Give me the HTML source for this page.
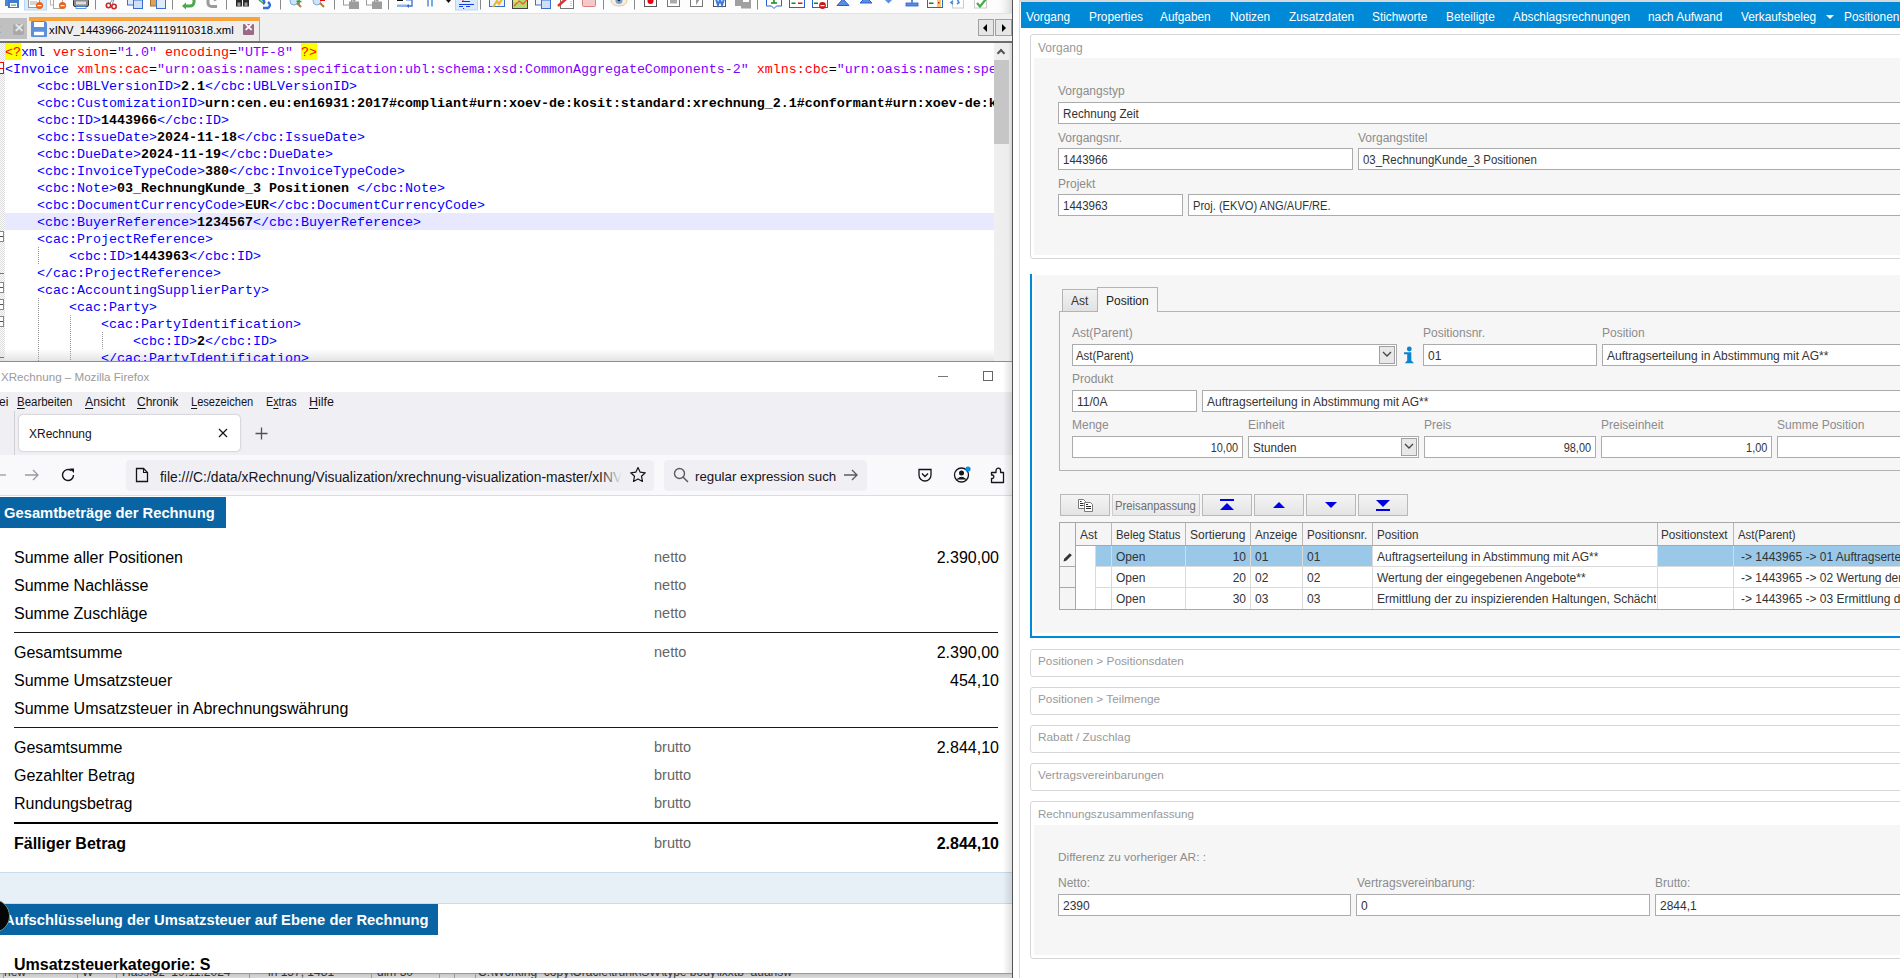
<!DOCTYPE html>
<html><head><meta charset="utf-8"><style>
*{box-sizing:border-box;margin:0;padding:0}
html,body{width:1900px;height:978px;overflow:hidden;background:#fff;font-family:"Liberation Sans",sans-serif}
body{position:relative}
.a{position:absolute}
.t{position:absolute;white-space:pre;line-height:1}
.ln{position:absolute;left:5px;height:17px;line-height:17px;white-space:pre;width:989px}
.tg{color:#0000ff}.at{color:#ff0000}.av{color:#8000ff}.bk{color:#000}.vl{color:#000;font-weight:bold}
.yl{color:#ff0000}
.ffm{font-size:12px;color:#15141a}
.ffm u{text-decoration:underline;text-underline-offset:2px}
.hdr{font-size:14.75px;font-weight:bold;color:#fff}
.inp{background:#fff;border:1px solid #ababab}
.it{color:#333}
.btn{background:linear-gradient(#f4f4f4,#e4e4e4);border:1px solid #b8b8b8}
.gt{font-size:12px;color:#333}
</style></head><body>
<svg class="a" style="left:0;top:0" width="1012" height="14" viewBox="0 0 1012 14">
<defs><linearGradient id="tbsh" x1="0" x2="1"><stop offset="0" stop-color="#fff" stop-opacity="0"/><stop offset="1" stop-color="#d8d8d8"/></linearGradient></defs>
<rect x="0" y="0" width="1012" height="14" fill="#fdfdfd"/>
<rect x="995" y="0" width="17" height="14" fill="url(#tbsh)"/>
<rect x="0" y="13" width="1012" height="1" fill="#e2e2e2"/>
<rect x="95.0" y="0" width="1" height="9.5" fill="#8a8a8a"/>
<rect x="172.0" y="0" width="1" height="9.5" fill="#8a8a8a"/>
<rect x="226.0" y="0" width="1" height="9.5" fill="#8a8a8a"/>
<rect x="280.0" y="0" width="1" height="9.5" fill="#8a8a8a"/>
<rect x="334.0" y="0" width="1" height="9.5" fill="#8a8a8a"/>
<rect x="388.0" y="0" width="1" height="9.5" fill="#8a8a8a"/>
<rect x="480.0" y="0" width="1" height="9.5" fill="#8a8a8a"/>
<rect x="603.0" y="0" width="1" height="9.5" fill="#8a8a8a"/>
<rect x="634.0" y="0" width="1" height="9.5" fill="#8a8a8a"/>
<rect x="757.0" y="0" width="1" height="9.5" fill="#8a8a8a"/>
<rect x="24.5" y="-1" width="22" height="11" fill="#d9ebfb" stroke="#b6d8f6"/>
<rect x="455.5" y="-1" width="22" height="11" fill="#d9ebfb" stroke="#b6d8f6"/>
<rect x="5" y="-2" width="11" height="8" fill="#4d86d4"/><rect x="8" y="0" width="11" height="8" fill="#3f7ad0"/><rect x="10" y="3" width="7" height="4" fill="#fff"/><rect x="11" y="4.5" width="5" height="1.2" fill="#5bb04a"/>
<rect x="28.5" y="-2" width="11" height="9.5" fill="#fff" stroke="#9a9a9a"/><path d="M30 2H37M30 4H36" stroke="#aaa"/>
<circle cx="39.5" cy="5.5" r="3.6" fill="#e5661c"/><rect x="37.5" y="5" width="4" height="1.2" fill="#fff"/>
<rect x="50.5" y="-2" width="8" height="7" fill="#fff" stroke="#b8b8b8"/><rect x="53.5" y="-1" width="9" height="9.5" fill="#fff" stroke="#aaa"/>
<circle cx="62.5" cy="5.5" r="3.6" fill="#e5661c"/><rect x="60.5" y="5" width="4" height="1.2" fill="#fff"/>
<rect x="73.5" y="-1" width="15" height="7.5" rx="1.5" fill="#8c8c8c" stroke="#333"/><rect x="76" y="1.5" width="10" height="3" fill="#ddd"/><rect x="76" y="6.5" width="10" height="2" fill="#fff" stroke="#3a7ad0" stroke-width=".8"/>
<circle cx="108.5" cy="5.5" r="2.2" fill="none" stroke="#c8282a" stroke-width="1.6"/><circle cx="114" cy="6.5" r="2.2" fill="none" stroke="#c8282a" stroke-width="1.6"/><path d="M110 3L113 -1M112.5 4L114 -1" stroke="#6a8fc0"/>
<rect x="127.5" y="-2" width="8" height="7" fill="#dce8f8" stroke="#3a6fd0"/><rect x="133.5" y="0" width="9" height="8.5" fill="#cfe0f6" stroke="#3a6fd0"/>
<rect x="150.5" y="-2" width="8" height="8" fill="#d9a45a" stroke="#a87030"/><rect x="156.5" y="-1" width="9" height="9.5" fill="#dfeafb" stroke="#3a6fd0"/>
<path d="M194 -2V2A4 4 0 0 1 190 6H185" stroke="#4aa84a" stroke-width="3" fill="none"/><path d="M182 6L186 2.5V9.5Z" fill="#4aa84a"/>
<path d="M208 -2V3A3.5 3.5 0 0 0 211.5 6.5H217" stroke="#9b9b9b" stroke-width="3" fill="none"/><path d="M217 -1L214 1" stroke="#9b9b9b" stroke-width="1.5"/>
<rect x="236" y="-1" width="6" height="7.5" fill="#2b2b2b"/><rect x="243" y="-1" width="6" height="7.5" fill="#2b2b2b"/><rect x="237.5" y="2.5" width="3" height="3.5" fill="#999"/><rect x="244.5" y="2.5" width="3" height="3.5" fill="#999"/>
<path d="M262 -1Q266 2 263 4M268 2Q272 5 268 8H263" stroke="#2f6fd6" stroke-width="2.4" fill="none"/><path d="M259 0L263 3" stroke="#3fa03f" stroke-width="1.5"/>
<circle cx="294" cy="1" r="4" fill="#cfe3f7" stroke="#7aaee0"/><path d="M297 3L301 7" stroke="#b07a3a" stroke-width="2"/><path d="M299 -1V4M296.5 1.5H301.5" stroke="#3a9a3a" stroke-width="1.5"/>
<circle cx="317" cy="1" r="4" fill="#cfe3f7" stroke="#7aaee0"/><path d="M320 3L324 7" stroke="#b07a3a" stroke-width="2"/><rect x="320" y="-1" width="5" height="2" fill="#e01010"/>
<rect x="343.5" y="-1" width="8" height="6" fill="#fff" stroke="#9a9a9a"/><rect x="349" y="1.5" width="10" height="7.5" fill="#9d9d9d"/><rect x="352.5" y="-1" width="3" height="2.5" fill="#9d9d9d"/>
<rect x="366.5" y="-1" width="8" height="6" fill="#fff" stroke="#9a9a9a"/><rect x="372" y="1.5" width="10" height="7.5" fill="#9d9d9d"/><rect x="375.5" y="-1" width="3" height="2.5" fill="#9d9d9d"/>
<rect x="397" y="-1" width="6" height="2" fill="#111"/><rect x="406" y="-1" width="6" height="1.5" fill="#4a80d0"/><rect x="397" y="4.5" width="11" height="2.5" fill="#8fb4ea"/><path d="M412 -1V6H408" stroke="#3a6fd0" stroke-width="1.3" fill="none"/><path d="M406.5 6L409 4V8Z" fill="#3a6fd0"/>
<rect x="427" y="-1" width="2" height="7.5" fill="#7aa8ee"/><rect x="431" y="-1" width="2" height="7.5" fill="#7aa8ee"/>
<path d="M446 0H451L448.5 3Z" fill="#111"/>
<path d="M462 1.5H470M459 4.5H474M459 6.5H463M466 6.5H470" stroke="#1a3ae8" stroke-width="1.2"/><rect x="462.5" y="-1" width="1" height="2" fill="#e02020"/><rect x="463" y="8" width="1.2" height="1" fill="#1a3ae8"/>
<rect x="489.5" y="-2" width="15" height="8.5" fill="#eef2fb" stroke="#3a6fd0"/><path d="M493 7L497 1L499 4L502 -1" stroke="#e8b830" stroke-width="2.2" fill="none"/>
<rect x="512.5" y="-2" width="15" height="10.5" fill="#b9d870" stroke="#444"/><path d="M514 6L519 1L523 4L527 0" stroke="#e85a2a" stroke-width="1.3" fill="none"/><rect x="513" y="-1" width="5" height="3" fill="#eadc6a"/>
<rect x="535.5" y="-2" width="8" height="7" fill="#eef4fc" stroke="#3a6fd0"/><rect x="541.5" y="0" width="9" height="8.5" fill="#cfe0f6" stroke="#3a6fd0"/>
<rect x="560.5" y="-2" width="13" height="10.5" fill="#fff" stroke="#777"/><path d="M558 6L566 -1" stroke="#e03030" stroke-width="2.5"/><path d="M571 1V7" stroke="#999" stroke-dasharray="1 1"/>
<rect x="582.5" y="-2" width="13" height="8.5" rx="1" fill="#f4c9c9" stroke="#d88080"/>
<ellipse cx="619" cy="1" rx="8" ry="5" fill="#f6efe0" stroke="#e0c8a0"/><circle cx="619" cy="0.5" r="3.5" fill="#7aa0d0"/><circle cx="619" cy="0" r="1.3" fill="#223"/>
<rect x="644.5" y="-2" width="12" height="8.5" fill="#fff" stroke="#555"/><circle cx="650.5" cy="1" r="3" fill="#e00010"/>
<rect x="667.5" y="-2" width="12" height="8.5" fill="#fff" stroke="#777"/><rect x="670" y="-1" width="7" height="4.5" fill="#aaa"/>
<rect x="690.5" y="-2" width="12" height="8.5" fill="#fff" stroke="#777"/><path d="M696 5L700 -1H696Z" fill="#9a9a9a"/>
<rect x="713.5" y="-2" width="12" height="8.5" fill="#fff" stroke="#555"/><path d="M716 -1L718 5L720 0L722 5L724 -1" stroke="#3a7ae0" stroke-width="2" fill="none"/>
<rect x="735" y="0" width="7" height="6" fill="#a0a0a0"/><rect x="741" y="-1" width="10" height="9.5" fill="#a0a0a0"/><rect x="743" y="-1" width="6" height="3" fill="#fff"/>
<path d="M766.5 -2H781.5V6H776.5L774 8.5L771.5 6H766.5Z" fill="#fff" stroke="#2a62d0"/><path d="M774 -1V3M771 3H777" stroke="#118a11" stroke-width="1.5"/>
<rect x="789.5" y="-2" width="15" height="9.5" fill="#fff" stroke="#2a62d0"/><rect x="791.5" y="2.5" width="4" height="1.5" fill="#118a11"/><rect x="798" y="2.5" width="4.5" height="1.5" fill="#e01010"/>
<rect x="812.5" y="-2" width="15" height="9.5" fill="#fff" stroke="#2a62d0"/><rect x="814" y="2.5" width="4" height="1.5" fill="#118a11"/><circle cx="822.5" cy="5.5" r="3.4" fill="#c81818"/><rect x="820.5" y="5" width="4" height="1.2" fill="#fff"/>
<path d="M837 5.5L843 -1L849 5.5Z" fill="#5b8ee0" stroke="#2a5ed0"/>
<path d="M860 3L866 -3L872 3Z" fill="#5b8ee0" stroke="#2a5ed0"/>
<path d="M885 0L888.5 3.5L892 0Z" fill="#5b8ee0"/>
<rect x="906" y="3" width="12" height="3" fill="#5b8ee0" stroke="#2a5ed0" stroke-width=".8"/><rect x="911" y="-1" width="2" height="4" fill="#5b8ee0"/>
<rect x="927.5" y="-2" width="15" height="9.5" fill="#fff" stroke="#2a62d0"/><rect x="929" y="2.5" width="4.5" height="1.5" fill="#118a11"/><rect x="937" y="-1" width="4" height="8" fill="#f6cc6a"/><rect x="938" y="2" width="1.5" height="1.5" fill="#e01010"/>
<rect x="952.5" y="-2" width="11" height="10" fill="#fff" stroke="#ccc"/><path d="M953 1L951 2.5L953 4M957 -1L959 2.5L957 4" stroke="#4a8ee0" stroke-width="1.6" fill="none"/>
<rect x="974.5" y="-2" width="12" height="10" fill="#fff" stroke="#ccc"/><path d="M977 3L980 6.5L986 -1" stroke="#4aaa4a" stroke-width="2.2" fill="none"/>
</svg>
<div class="a" style="left:0;top:14px;width:1012px;height:27px;background:#f0f0f0"></div>
<div class="a" style="left:0;top:18px;width:27px;height:21px;background:#c0c0c0"></div>
<div class="t" style="left:-3px;top:23px;font-size:12px;color:#666">t</div>
<div class="a" style="left:13px;top:24px;width:11px;height:11px;background:#a9a9a9;border-radius:2px"></div>
<div class="t" style="left:14px;top:22px;font-size:12px;color:#e8e8e8;font-weight:bold">✕</div>
<div class="a" style="left:29px;top:17px;width:231px;height:24px;background:#eeeeee;border-right:1px solid #a8a8a8"></div>
<div class="a" style="left:29px;top:17px;width:231px;height:4px;background:#f9a43a"></div>
<div class="a" style="left:31px;top:21px;width:16px;height:16px;background:#5b8fd8;border-radius:1px 3px 1px 1px"></div>
<div class="a" style="left:34px;top:22px;width:10px;height:5px;background:#fff"></div>
<div class="a" style="left:34px;top:31px;width:10px;height:5px;background:#fff;border-top:1px solid #7bc35b;border-bottom:1px solid #7bc35b"></div>
<div class="t" style="left:49px;top:25px;font-size:11.3px;color:#000">xINV_1443966-20241119110318.xml</div>
<div class="a" style="left:243px;top:24px;width:11px;height:11px;background:#9a6a85;border-radius:1px"></div>
<div class="t" style="left:244px;top:22px;font-size:11px;color:#fff;font-weight:bold">✕</div>
<div class="a" style="left:978px;top:19px;width:16px;height:17px;background:#e6e6e6;border:1px solid #a0a0a0"></div>
<div class="a" style="left:995px;top:19px;width:17px;height:17px;background:#e6e6e6;border:1px solid #a0a0a0"></div>
<div class="a" style="left:983px;top:24px;width:0;height:0;border-top:4px solid transparent;border-bottom:4px solid transparent;border-right:4px solid #000"></div>
<div class="a" style="left:1002px;top:24px;width:0;height:0;border-top:4px solid transparent;border-bottom:4px solid transparent;border-left:4px solid #000"></div>
<div class="a" style="left:0;top:41px;width:1012px;height:2px;background:#6e6e6e"></div>
<div class="a" style="left:0;top:43px;width:994px;height:318px;background:#fff;overflow:hidden;font-family:'Liberation Mono',monospace;font-size:13.33px">
<div class="a" style="left:0;top:0;width:5px;height:318px;background:repeating-conic-gradient(#dedede 0 25%,#fbfbfb 0 50%) 0 0/2px 2px"></div>
<div class="a" style="left:0;top:306px;width:994px;height:12px;background:linear-gradient(rgba(255,255,255,0),rgba(225,225,225,.9))"></div>
<div class="a" style="left:5px;top:170px;width:989px;height:17px;background:#e8e8ff"></div>
<div class="a" style="left:5px;top:0;width:16px;height:17px;background:#ffff00"></div>
<div class="a" style="left:301px;top:0;width:16px;height:17px;background:#ffff00"></div>
<div class="ln" style="top:1px"><span class="yl">&lt;?</span><span class="tg">xml</span><span class="at"> version</span><span class="bk">=</span><span class="av">&quot;1.0&quot;</span><span class="at"> encoding</span><span class="bk">=</span><span class="av">&quot;UTF-8&quot;</span><span class="bk"> </span><span class="yl">?&gt;</span></div>
<div class="ln" style="top:18px"><span class="tg">&lt;Invoice</span><span class="at"> xmlns:cac</span><span class="bk">=</span><span class="av">&quot;urn:oasis:names:specification:ubl:schema:xsd:CommonAggregateComponents-2&quot;</span><span class="at"> xmlns:cbc</span><span class="bk">=</span><span class="av">&quot;urn:oasis:names:specification:ubl:schema:xsd:CommonBasicComponents-2&quot;</span></div>
<div class="ln" style="top:35px">    <span class="tg">&lt;cbc:UBLVersionID&gt;</span><span class="vl">2.1</span><span class="tg">&lt;/cbc:UBLVersionID&gt;</span></div>
<div class="ln" style="top:52px">    <span class="tg">&lt;cbc:CustomizationID&gt;</span><span class="vl">urn:cen.eu:en16931:2017#compliant#urn:xoev-de:kosit:standard:xrechnung_2.1#conformant#urn:xoev-de:kosit:extension:xrechnung_2.1</span><span class="tg">&lt;/cbc:CustomizationID&gt;</span></div>
<div class="ln" style="top:69px">    <span class="tg">&lt;cbc:ID&gt;</span><span class="vl">1443966</span><span class="tg">&lt;/cbc:ID&gt;</span></div>
<div class="ln" style="top:86px">    <span class="tg">&lt;cbc:IssueDate&gt;</span><span class="vl">2024-11-18</span><span class="tg">&lt;/cbc:IssueDate&gt;</span></div>
<div class="ln" style="top:103px">    <span class="tg">&lt;cbc:DueDate&gt;</span><span class="vl">2024-11-19</span><span class="tg">&lt;/cbc:DueDate&gt;</span></div>
<div class="ln" style="top:120px">    <span class="tg">&lt;cbc:InvoiceTypeCode&gt;</span><span class="vl">380</span><span class="tg">&lt;/cbc:InvoiceTypeCode&gt;</span></div>
<div class="ln" style="top:137px">    <span class="tg">&lt;cbc:Note&gt;</span><span class="vl">03_RechnungKunde_3 Positionen </span><span class="tg">&lt;/cbc:Note&gt;</span></div>
<div class="ln" style="top:154px">    <span class="tg">&lt;cbc:DocumentCurrencyCode&gt;</span><span class="vl">EUR</span><span class="tg">&lt;/cbc:DocumentCurrencyCode&gt;</span></div>
<div class="ln" style="top:171px">    <span class="tg">&lt;cbc:BuyerReference&gt;</span><span class="vl">1234567</span><span class="tg">&lt;/cbc:BuyerReference&gt;</span></div>
<div class="ln" style="top:188px">    <span class="tg">&lt;cac:ProjectReference&gt;</span></div>
<div class="ln" style="top:205px">        <span class="tg">&lt;cbc:ID&gt;</span><span class="vl">1443963</span><span class="tg">&lt;/cbc:ID&gt;</span></div>
<div class="ln" style="top:222px">    <span class="tg">&lt;/cac:ProjectReference&gt;</span></div>
<div class="ln" style="top:239px">    <span class="tg">&lt;cac:AccountingSupplierParty&gt;</span></div>
<div class="ln" style="top:256px">        <span class="tg">&lt;cac:Party&gt;</span></div>
<div class="ln" style="top:273px">            <span class="tg">&lt;cac:PartyIdentification&gt;</span></div>
<div class="ln" style="top:290px">                <span class="tg">&lt;cbc:ID&gt;</span><span class="vl">2</span><span class="tg">&lt;/cbc:ID&gt;</span></div>
<div class="ln" style="top:307px">            <span class="tg">&lt;/cac:PartyIdentification&gt;</span></div>
<div class="a" style="left:38px;top:204px;width:1px;height:17px;background:repeating-linear-gradient(#999 0 1px,transparent 1px 2px)"></div>
<div class="a" style="left:38px;top:255px;width:1px;height:63px;background:repeating-linear-gradient(#999 0 1px,transparent 1px 2px)"></div>
<div class="a" style="left:70px;top:272px;width:1px;height:46px;background:repeating-linear-gradient(#999 0 1px,transparent 1px 2px)"></div>
<div class="a" style="left:102px;top:289px;width:1px;height:17px;background:repeating-linear-gradient(#999 0 1px,transparent 1px 2px)"></div>
<div class="a" style="left:-4px;top:19px;width:8px;height:12px;border:1px solid #f00;background:#fff"></div>
<div class="a" style="left:0;top:25px;width:3px;height:1px;background:#f00"></div>
<div class="a" style="left:-4px;top:188px;width:8px;height:11px;border:1px solid #888;background:#fff"></div>
<div class="a" style="left:0;top:193px;width:3px;height:1px;background:#555"></div>
<div class="a" style="left:-4px;top:239px;width:8px;height:11px;border:1px solid #888;background:#fff"></div>
<div class="a" style="left:0;top:244px;width:3px;height:1px;background:#555"></div>
<div class="a" style="left:-4px;top:256px;width:8px;height:11px;border:1px solid #888;background:#fff"></div>
<div class="a" style="left:0;top:261px;width:3px;height:1px;background:#555"></div>
<div class="a" style="left:-4px;top:273px;width:8px;height:11px;border:1px solid #888;background:#fff"></div>
<div class="a" style="left:0;top:278px;width:3px;height:1px;background:#555"></div>
<div class="a" style="left:0;top:230px;width:4px;height:1px;background:#777"></div>
<div class="a" style="left:0;top:314px;width:4px;height:1px;background:#777"></div>
</div>
<div class="a" style="left:994px;top:43px;width:18px;height:318px;background:linear-gradient(90deg,#f0f0f0,#ececec 80%,#d4d4d4)"></div>
<div class="a" style="left:994px;top:60px;width:15px;height:84px;background:#c6c6c6"></div>
<div class="a" style="left:998px;top:50px;width:6px;height:6px;border-left:2px solid #555;border-top:2px solid #555;transform:rotate(45deg)"></div>
<div class="a" style="left:0;top:361px;width:1012px;height:1px;background:#8c8c8c"></div>
<div class="a" style="left:0;top:362px;width:1012px;height:30px;background:#fff"></div>
<div class="t" style="left:1px;top:371px;font-size:11.6px;color:#9a9a9a">XRechnung – Mozilla Firefox</div>
<div class="a" style="left:938px;top:376px;width:10px;height:1px;background:#777"></div>
<div class="a" style="left:983px;top:371px;width:10px;height:10px;border:1px solid #666"></div>
<div class="a" style="left:0;top:392px;width:1012px;height:63px;background:#f0f0f4"></div>
<div class="t ffm" style="left:-1px;top:396px;transform:scaleX(1.000);transform-origin:0 0">ei</div>
<div class="t ffm" style="left:17px;top:396px;transform:scaleX(0.956);transform-origin:0 0"><u>B</u>earbeiten</div>
<div class="t ffm" style="left:85px;top:396px;transform:scaleX(1.017);transform-origin:0 0"><u>A</u>nsicht</div>
<div class="t ffm" style="left:137px;top:396px;transform:scaleX(1.000);transform-origin:0 0"><u>C</u>hronik</div>
<div class="t ffm" style="left:191px;top:396px;transform:scaleX(0.923);transform-origin:0 0"><u>L</u>esezeichen</div>
<div class="t ffm" style="left:266px;top:396px;transform:scaleX(0.897);transform-origin:0 0">E<u>x</u>tras</div>
<div class="t ffm" style="left:309px;top:396px;transform:scaleX(1.042);transform-origin:0 0"><u>H</u>ilfe</div>
<div class="a" style="left:14px;top:411px;width:1px;height:44px;background:#cfcfd8"></div>
<div class="a" style="left:19px;top:415px;width:221px;height:36px;background:#fff;border-radius:4px;box-shadow:0 0 2px rgba(0,0,0,.35)"></div>
<div class="t" style="left:29px;top:428px;font-size:12px;color:#15141a">XRechnung</div>
<svg class="a" style="left:217px;top:427px" width="12" height="12"><path d="M2 2L10 10M10 2L2 10" stroke="#15141a" stroke-width="1.2"/></svg>
<svg class="a" style="left:255px;top:427px" width="13" height="13"><path d="M6.5 0.5V12.5M0.5 6.5H12.5" stroke="#505058" stroke-width="1.3"/></svg>
<div class="a" style="left:0;top:455px;width:1012px;height:40px;background:#f9f9fb"></div>
<div class="a" style="left:0;top:495px;width:1012px;height:1px;background:#dcdce2"></div>
<svg class="a" style="left:0;top:467px" width="8" height="16"><path d="M-6 8H6" stroke="#9a9aa0" stroke-width="1.3"/></svg>
<svg class="a" style="left:24px;top:467px" width="16" height="16"><path d="M1 8H14M9 3L14 8L9 13" stroke="#9a9aa0" stroke-width="1.3" fill="none"/></svg>
<svg class="a" style="left:60px;top:467px" width="16" height="16"><path d="M13.5 8A5.5 5.5 0 1 1 11.5 3.8" stroke="#15141a" stroke-width="1.4" fill="none"/><path d="M9.5 1.5H14V6Z" fill="#15141a"/></svg>
<div class="a" style="left:126px;top:460px;width:528px;height:31px;background:#f0f0f4;border-radius:4px"></div>
<svg class="a" style="left:135px;top:467px" width="14" height="16"><path d="M1.5 1.5H8.5L12.5 5.5V14.5H1.5Z" stroke="#15141a" stroke-width="1.3" fill="none"/><path d="M8.5 1.5V5.5H12.5" stroke="#15141a" stroke-width="1.1" fill="none"/></svg>
<div class="a" style="left:160px;top:466px;width:462px;height:20px;overflow:hidden"><div class="t" style="left:0;top:5px;font-size:13.85px;color:#15141a">file:///C:/data/xRechnung/Visualization/xrechnung-visualization-master/xINV</div><div class="a" style="left:440px;top:0;width:22px;height:20px;background:linear-gradient(90deg,rgba(240,240,244,0),#f0f0f4)"></div></div>
<svg class="a" style="left:629px;top:466px" width="18" height="18"><path d="M9 1.5L11.2 6.2L16.3 6.8L12.5 10.3L13.5 15.4L9 12.9L4.5 15.4L5.5 10.3L1.7 6.8L6.8 6.2Z" stroke="#15141a" stroke-width="1.2" fill="none" stroke-linejoin="round"/></svg>
<div class="a" style="left:664px;top:460px;width:203px;height:31px;background:#f0f0f4;border-radius:4px"></div>
<svg class="a" style="left:673px;top:467px" width="16" height="16"><circle cx="6.5" cy="6.5" r="5" stroke="#5b5b66" stroke-width="1.4" fill="none"/><path d="M10 10L15 15" stroke="#5b5b66" stroke-width="1.5"/></svg>
<div class="a" style="left:695px;top:466px;width:142px;height:20px;overflow:hidden"><div class="t" style="left:0;top:4px;font-size:13.3px;color:#15141a">regular expression such</div></div>
<svg class="a" style="left:843px;top:467px" width="16" height="16"><path d="M1 8H14M9 3L14 8L9 13" stroke="#5b5b66" stroke-width="1.4" fill="none"/></svg>
<svg class="a" style="left:917px;top:467px" width="16" height="16"><path d="M2 2.5H14V8A6 6 0 0 1 2 8Z" stroke="#15141a" stroke-width="1.3" fill="none"/><path d="M5 6.5L8 9.5L11 6.5" stroke="#15141a" stroke-width="1.4" fill="none"/></svg>
<svg class="a" style="left:953px;top:466px" width="18" height="18"><circle cx="8.5" cy="9" r="7" stroke="#15141a" stroke-width="1.3" fill="none"/><circle cx="8.5" cy="7" r="2.5" fill="#15141a"/><path d="M4 13.5Q8.5 9 13 13.5" fill="#15141a" stroke="#15141a"/><circle cx="15" cy="3" r="2.6" fill="#0090ed"/></svg>
<svg class="a" style="left:989px;top:466px" width="17" height="18"><path d="M2.5 16.5V12.5H3.5A1.8 1.8 0 0 0 3.5 9H2.5V6.5H7V4.5A2.3 2.3 0 0 1 11.6 4.5V6.5H14.5V16.5Z" stroke="#15141a" stroke-width="1.3" fill="none" stroke-linejoin="round"/></svg>
<div class="a" style="left:0;top:496px;width:1012px;height:477px;background:#fff"></div>
<div class="a" style="left:0;top:497px;width:226px;height:31px;background:#0864a2"></div>
<div class="t hdr" style="left:4px;top:506px">Gesamtbeträge der Rechnung</div>
<div class="t" style="left:14px;top:550px;font-size:16px;color:#000">Summe aller Positionen</div>
<div class="t" style="left:654px;top:550px;font-size:14.5px;color:#666">netto</div>
<div class="t" style="right:901px;top:550px;font-size:16px;color:#000">2.390,00</div>
<div class="t" style="left:14px;top:578px;font-size:16px;color:#000">Summe Nachlässe</div>
<div class="t" style="left:654px;top:578px;font-size:14.5px;color:#666">netto</div>
<div class="t" style="left:14px;top:606px;font-size:16px;color:#000">Summe Zuschläge</div>
<div class="t" style="left:654px;top:606px;font-size:14.5px;color:#666">netto</div>
<div class="t" style="left:14px;top:645px;font-size:16px;color:#000">Gesamtsumme</div>
<div class="t" style="left:654px;top:645px;font-size:14.5px;color:#666">netto</div>
<div class="t" style="right:901px;top:645px;font-size:16px;color:#000">2.390,00</div>
<div class="t" style="left:14px;top:673px;font-size:16px;color:#000">Summe Umsatzsteuer</div>
<div class="t" style="right:901px;top:673px;font-size:16px;color:#000">454,10</div>
<div class="t" style="left:14px;top:701px;font-size:16px;color:#000">Summe Umsatzsteuer in Abrechnungswährung</div>
<div class="t" style="left:14px;top:740px;font-size:16px;color:#000">Gesamtsumme</div>
<div class="t" style="left:654px;top:740px;font-size:14.5px;color:#666">brutto</div>
<div class="t" style="right:901px;top:740px;font-size:16px;color:#000">2.844,10</div>
<div class="t" style="left:14px;top:768px;font-size:16px;color:#000">Gezahlter Betrag</div>
<div class="t" style="left:654px;top:768px;font-size:14.5px;color:#666">brutto</div>
<div class="t" style="left:14px;top:796px;font-size:16px;color:#000">Rundungsbetrag</div>
<div class="t" style="left:654px;top:796px;font-size:14.5px;color:#666">brutto</div>
<div class="a" style="left:14px;top:632px;width:984px;height:1px;background:#1a1a1a"></div>
<div class="a" style="left:14px;top:727px;width:984px;height:1px;background:#1a1a1a"></div>
<div class="a" style="left:14px;top:822px;width:984px;height:2px;background:#000"></div>
<div class="t" style="left:14px;top:836px;font-size:16px;font-weight:bold;color:#000">Fälliger Betrag</div>
<div class="t" style="left:654px;top:836px;font-size:14.5px;color:#666">brutto</div>
<div class="t" style="right:901px;top:836px;font-size:16px;font-weight:bold;color:#000">2.844,10</div>
<div class="a" style="left:0;top:872px;width:1012px;height:32px;background:#e8f0f7;border-top:1px solid #c9dbe9;border-bottom:1px solid #c9dbe9"></div>
<div class="a" style="left:0;top:904px;width:438px;height:31px;background:#0864a2"></div>
<div class="t hdr" style="left:4px;top:913px">Aufschlüsselung der Umsatzsteuer auf Ebene der Rechnung</div>
<div class="a" style="left:-24px;top:899px;width:34px;height:34px;border-radius:17px;background:#050505;border:1.5px solid #5f9a9a"></div>
<div class="t" style="left:14px;top:957px;font-size:16px;font-weight:bold;color:#000">Umsatzsteuerkategorie: S</div>
<div class="a" style="left:1003px;top:362px;width:9px;height:611px;background:linear-gradient(90deg,rgba(0,0,0,0),rgba(0,0,0,.12))"></div>
<div class="a" style="left:0;top:973px;width:1012px;height:5px;background:linear-gradient(#c8c8c8,#dadada);border-top:1px solid #9a9a9a;overflow:hidden"></div>
<div class="a" style="left:3px;top:974px;width:1px;height:4px;background:#9a9a9a"></div>
<div class="a" style="left:77px;top:974px;width:1px;height:4px;background:#9a9a9a"></div>
<div class="a" style="left:116px;top:974px;width:1px;height:4px;background:#9a9a9a"></div>
<div class="a" style="left:249px;top:974px;width:1px;height:4px;background:#9a9a9a"></div>
<div class="a" style="left:371px;top:974px;width:1px;height:4px;background:#9a9a9a"></div>
<div class="a" style="left:439px;top:974px;width:1px;height:4px;background:#9a9a9a"></div>
<div class="a" style="left:454px;top:974px;width:1px;height:4px;background:#9a9a9a"></div>
<div class="a" style="left:475px;top:974px;width:1px;height:4px;background:#9a9a9a"></div>
<div class="t" style="left:4px;top:966px;font-size:12px;color:#333;clip-path:inset(7px 0 0 0)">new</div>
<div class="t" style="left:82px;top:966px;font-size:12px;color:#333;clip-path:inset(7px 0 0 0)">W</div>
<div class="t" style="left:122px;top:966px;font-size:12px;color:#333;clip-path:inset(7px 0 0 0)">Hassloz  19.11.2024</div>
<div class="t" style="left:268px;top:966px;font-size:12px;color:#333;clip-path:inset(7px 0 0 0)">in 157, 1481</div>
<div class="t" style="left:377px;top:966px;font-size:12px;color:#333;clip-path:inset(7px 0 0 0)">dim 30</div>
<div class="t" style="left:478px;top:966px;font-size:12px;color:#333;clip-path:inset(7px 0 0 0)">C:\Working_copy\Oracle\trunk\SW\type body\ixxtb_auansw</div>
<div class="a" style="left:1012px;top:0;width:1px;height:978px;background:#555"></div>
<div class="a" style="left:1013px;top:0;width:887px;height:978px;background:#fff"></div>
<div class="a" style="left:1019px;top:0;width:1px;height:978px;background:#d9d9d9"></div>
<div class="a" style="left:1019px;top:0;width:881px;height:2px;background:#d9d9d9"></div>
<div class="a" style="left:1021px;top:2px;width:879px;height:26px;background:#0089d6"></div>
<div class="t" style="left:1026px;top:12px;font-size:11.85px;color:#fff">Vorgang</div>
<div class="t" style="left:1089px;top:12px;font-size:11.85px;color:#fff">Properties</div>
<div class="t" style="left:1160px;top:12px;font-size:11.85px;color:#fff">Aufgaben</div>
<div class="t" style="left:1230px;top:12px;font-size:11.85px;color:#fff">Notizen</div>
<div class="t" style="left:1289px;top:12px;font-size:11.85px;color:#fff">Zusatzdaten</div>
<div class="t" style="left:1372px;top:12px;font-size:11.85px;color:#fff">Stichworte</div>
<div class="t" style="left:1446px;top:12px;font-size:11.85px;color:#fff">Beteiligte</div>
<div class="t" style="left:1513px;top:12px;font-size:11.85px;color:#fff">Abschlagsrechnungen</div>
<div class="t" style="left:1648px;top:12px;font-size:11.85px;color:#fff">nach Aufwand</div>
<div class="t" style="left:1741px;top:12px;font-size:11.85px;color:#fff">Verkaufsbeleg</div>
<div class="t" style="left:1844px;top:12px;font-size:11.85px;color:#fff">Positionen</div>
<div class="a" style="left:1826px;top:15px;width:0;height:0;border-left:4px solid transparent;border-right:4px solid transparent;border-top:4px solid #fff"></div>
<div class="a" style="left:1030px;top:34px;width:900px;height:225px;border:1px solid #d6d6d6;border-radius:3px;background:#fff"></div>
<div class="t" style="left:1038px;top:42px;font-size:12px;color:#999">Vorgang</div>
<div class="a" style="left:1034px;top:58px;width:866px;height:197px;background:#f6f6f6"></div>
<div class="t" style="left:1058px;top:85px;font-size:12px;color:#8c8c8c">Vorgangstyp</div>
<div class="a inp" style="left:1058px;top:102px;width:900px;height:22px"></div>
<div class="t it" style="left:1063px;top:108px;font-size:12px;transform:scaleX(0.972);transform-origin:0 0">Rechnung Zeit</div>
<div class="t" style="left:1058px;top:132px;font-size:12px;color:#8c8c8c">Vorgangsnr.</div>
<div class="a inp" style="left:1058px;top:148px;width:295px;height:22px"></div>
<div class="t it" style="left:1063px;top:154px;font-size:12px;transform:scaleX(0.957);transform-origin:0 0">1443966</div>
<div class="t" style="left:1358px;top:132px;font-size:12px;color:#8c8c8c">Vorgangstitel</div>
<div class="a inp" style="left:1358px;top:148px;width:600px;height:22px"></div>
<div class="t it" style="left:1363px;top:154px;font-size:12px;transform:scaleX(0.954);transform-origin:0 0">03_RechnungKunde_3 Positionen</div>
<div class="t" style="left:1058px;top:178px;font-size:12px;color:#8c8c8c">Projekt</div>
<div class="a inp" style="left:1058px;top:194px;width:125px;height:22px"></div>
<div class="t it" style="left:1063px;top:200px;font-size:12px;transform:scaleX(0.957);transform-origin:0 0">1443963</div>
<div class="a inp" style="left:1188px;top:194px;width:800px;height:22px"></div>
<div class="t it" style="left:1193px;top:200px;font-size:12px;transform:scaleX(0.925);transform-origin:0 0">Proj. (EKVO) ANG/AUF/RE.</div>
<div class="a" style="left:1030px;top:274px;width:900px;height:364px;border-left:2px solid #0089d6;border-bottom:2px solid #0089d6"></div>
<div class="a" style="left:1034px;top:275px;width:866px;height:358px;background:#f6f6f6"></div>
<div class="a" style="left:1059px;top:311px;width:900px;height:160px;border:1px solid #b4b4b4;background:#f6f6f6"></div>
<div class="a" style="left:1062px;top:289px;width:36px;height:22px;background:linear-gradient(#f2f2f2,#e2e2e2);border:1px solid #b4b4b4;border-bottom:none"></div>
<div class="a" style="left:1097px;top:287px;width:61px;height:25px;background:#f6f6f6;border:1px solid #b4b4b4;border-bottom:none"></div>
<div class="t" style="left:1071px;top:295px;font-size:12px;color:#333">Ast</div>
<div class="t" style="left:1106px;top:295px;font-size:12px;color:#222">Position</div>
<div class="t" style="left:1072px;top:327px;font-size:12px;color:#8c8c8c">Ast(Parent)</div>
<div class="a inp" style="left:1072px;top:344px;width:325px;height:22px"></div>
<div class="t it" style="left:1076px;top:350px;font-size:12px;transform:scaleX(0.947);transform-origin:0 0">Ast(Parent)</div>
<div class="a" style="left:1379px;top:346px;width:16px;height:18px;background:#e8e8e8;border:1px solid #a0a0a0"></div>
<svg class="a" style="left:1382px;top:351px" width="10" height="7"><path d="M1 1L5 5L9 1" stroke="#444" stroke-width="1.3" fill="none"/></svg>
<svg class="a" style="left:1403px;top:345px" width="12" height="20"><circle cx="6.3" cy="4" r="2.4" fill="#0a84d0"/><path d="M1 7.2H8.3V15.6L11 18.2H1.8L4.2 15.6V9.2H1Z" fill="#0a84d0"/></svg>
<div class="t" style="left:1423px;top:327px;font-size:12px;color:#8c8c8c">Positionsnr.</div>
<div class="a inp" style="left:1423px;top:344px;width:174px;height:22px"></div>
<div class="t it" style="left:1428px;top:350px;font-size:12px;transform:scaleX(1);transform-origin:0 0">01</div>
<div class="t" style="left:1602px;top:327px;font-size:12px;color:#8c8c8c">Position</div>
<div class="a inp" style="left:1602px;top:344px;width:400px;height:22px"></div>
<div class="t it" style="left:1607px;top:350px;font-size:12px;transform:scaleX(1);transform-origin:0 0">Auftragserteilung in Abstimmung mit AG**</div>
<div class="t" style="left:1072px;top:373px;font-size:12px;color:#8c8c8c">Produkt</div>
<div class="a inp" style="left:1072px;top:390px;width:125px;height:22px"></div>
<div class="t it" style="left:1077px;top:396px;font-size:12px;transform:scaleX(1);transform-origin:0 0">11/0A</div>
<div class="a inp" style="left:1202px;top:390px;width:800px;height:22px"></div>
<div class="t it" style="left:1207px;top:396px;font-size:12px;transform:scaleX(1);transform-origin:0 0">Auftragserteilung in Abstimmung mit AG**</div>
<div class="t" style="left:1072px;top:419px;font-size:12px;color:#8c8c8c">Menge</div>
<div class="a inp" style="left:1072px;top:436px;width:171px;height:22px"></div>
<div class="t it" style="right:662px;top:442px;font-size:12px;transform:scaleX(0.91);transform-origin:100% 0">10,00</div>
<div class="t" style="left:1248px;top:419px;font-size:12px;color:#8c8c8c">Einheit</div>
<div class="a inp" style="left:1248px;top:436px;width:171px;height:22px"></div>
<div class="t it" style="left:1253px;top:442px;font-size:12px;transform:scaleX(0.973);transform-origin:0 0">Stunden</div>
<div class="a" style="left:1401px;top:438px;width:16px;height:18px;background:#e8e8e8;border:1px solid #a0a0a0"></div>
<svg class="a" style="left:1404px;top:443px" width="10" height="7"><path d="M1 1L5 5L9 1" stroke="#444" stroke-width="1.3" fill="none"/></svg>
<div class="t" style="left:1424px;top:419px;font-size:12px;color:#8c8c8c">Preis</div>
<div class="a inp" style="left:1424px;top:436px;width:172px;height:22px"></div>
<div class="t it" style="right:309px;top:442px;font-size:12px;transform:scaleX(0.91);transform-origin:100% 0">98,00</div>
<div class="t" style="left:1601px;top:419px;font-size:12px;color:#8c8c8c">Preiseinheit</div>
<div class="a inp" style="left:1601px;top:436px;width:171px;height:22px"></div>
<div class="t it" style="right:133px;top:442px;font-size:12px;transform:scaleX(0.91);transform-origin:100% 0">1,00</div>
<div class="t" style="left:1777px;top:419px;font-size:12px;color:#8c8c8c">Summe Position</div>
<div class="a inp" style="left:1777px;top:436px;width:200px;height:22px"></div>
<div class="a btn" style="left:1060px;top:494px;width:50px;height:22px"></div>
<div class="a btn" style="left:1112px;top:494px;width:88px;height:22px"></div>
<div class="a btn" style="left:1202px;top:494px;width:50px;height:22px"></div>
<div class="a btn" style="left:1254px;top:494px;width:50px;height:22px"></div>
<div class="a btn" style="left:1306px;top:494px;width:50px;height:22px"></div>
<div class="a btn" style="left:1358px;top:494px;width:50px;height:22px"></div>
<svg class="a" style="left:1077px;top:498px" width="17" height="15"><path d="M1.5 1.5H6.5L8.5 3.5V10.5H1.5Z" fill="#fff" stroke="#7a7a7a"/><path d="M3 3.5H4.5M3 5.5H6.5M3 7.5H6.5" stroke="#111" stroke-width=".9"/><path d="M7.5 4.5H13.5L15.5 6.5V13.5H7.5Z" fill="#fff" stroke="#7a7a7a"/><path d="M9 6.5H11M9 8.5H14M9 10.5H14" stroke="#111" stroke-width=".9"/></svg>
<div class="a" style="left:1112px;top:494px;width:88px;height:22px;background:linear-gradient(#f4f4f4,#e8e8e8);border:1px solid #cdcdcd"></div>
<div class="t" style="left:1115px;top:500px;font-size:12px;color:#6e6e6e;transform:scaleX(0.94);transform-origin:0 0">Preisanpassung</div>
<svg class="a" style="left:1219px;top:499px" width="16" height="12"><rect x="1" y="0" width="14" height="2" fill="#0000e0"/><path d="M1 11L8 4L15 11Z" fill="#0000e0"/></svg>
<svg class="a" style="left:1271px;top:501px" width="16" height="8"><path d="M2 7L8 1L14 7Z" fill="#0000e0"/></svg>
<svg class="a" style="left:1323px;top:501px" width="16" height="8"><path d="M2 1L8 7L14 1Z" fill="#0000e0"/></svg>
<svg class="a" style="left:1375px;top:499px" width="16" height="12"><path d="M1 1L8 8L15 1Z" fill="#0000e0"/><rect x="1" y="10" width="14" height="2" fill="#0000e0"/></svg>
<div class="a" style="left:1059px;top:522px;width:900px;height:88px;background:#fff;border:1px solid #a8a8a8"></div>
<div class="a" style="left:1060px;top:523px;width:900px;height:23px;background:#f5f5f5;border-bottom:1px solid #a8a8a8"></div>
<div class="a" style="left:1075px;top:523px;width:1px;height:22px;background:#a8a8a8"></div>
<div class="a" style="left:1060px;top:545px;width:16px;height:64px;background:#f5f5f5;border-right:1px solid #a8a8a8"></div>
<div class="a" style="left:1096px;top:546px;width:277px;height:20px;background:#99c8e8"></div>
<div class="a" style="left:1658px;top:546px;width:300px;height:20px;background:#99c8e8"></div>
<div class="a" style="left:1060px;top:566px;width:900px;height:1px;background:#dadada"></div>
<div class="a" style="left:1060px;top:566px;width:16px;height:1px;background:#a8a8a8"></div>
<div class="a" style="left:1060px;top:587px;width:900px;height:1px;background:#dadada"></div>
<div class="a" style="left:1060px;top:587px;width:16px;height:1px;background:#a8a8a8"></div>
<div class="a" style="left:1076px;top:546px;width:20px;height:63px;background:#fff"></div>
<div class="a" style="left:1111px;top:523px;width:1px;height:22px;background:#b8b8b8"></div>
<div class="a" style="left:1111px;top:546px;width:1px;height:63px;background:#dadada"></div>
<div class="a" style="left:1185px;top:523px;width:1px;height:22px;background:#b8b8b8"></div>
<div class="a" style="left:1185px;top:546px;width:1px;height:63px;background:#dadada"></div>
<div class="a" style="left:1250px;top:523px;width:1px;height:22px;background:#b8b8b8"></div>
<div class="a" style="left:1250px;top:546px;width:1px;height:63px;background:#dadada"></div>
<div class="a" style="left:1302px;top:523px;width:1px;height:22px;background:#b8b8b8"></div>
<div class="a" style="left:1302px;top:546px;width:1px;height:63px;background:#dadada"></div>
<div class="a" style="left:1372px;top:523px;width:1px;height:22px;background:#b8b8b8"></div>
<div class="a" style="left:1372px;top:546px;width:1px;height:63px;background:#dadada"></div>
<div class="a" style="left:1657px;top:523px;width:1px;height:22px;background:#b8b8b8"></div>
<div class="a" style="left:1657px;top:546px;width:1px;height:63px;background:#dadada"></div>
<div class="a" style="left:1733px;top:523px;width:1px;height:22px;background:#b8b8b8"></div>
<div class="a" style="left:1733px;top:546px;width:1px;height:63px;background:#dadada"></div>
<div class="a" style="left:1095px;top:546px;width:1px;height:63px;background:#dadada"></div>
<div class="t gt" style="left:1080px;top:529px;transform:scaleX(1);transform-origin:0 0">Ast</div>
<div class="t gt" style="left:1116px;top:529px;transform:scaleX(0.946);transform-origin:0 0">Beleg Status</div>
<div class="t gt" style="left:1190px;top:529px;transform:scaleX(1);transform-origin:0 0">Sortierung</div>
<div class="t gt" style="left:1255px;top:529px;transform:scaleX(0.973);transform-origin:0 0">Anzeige</div>
<div class="t gt" style="left:1307px;top:529px;transform:scaleX(0.97);transform-origin:0 0">Positionsnr.</div>
<div class="t gt" style="left:1377px;top:529px;transform:scaleX(0.97);transform-origin:0 0">Position</div>
<div class="t gt" style="left:1661px;top:529px;transform:scaleX(0.979);transform-origin:0 0">Positionstext</div>
<div class="t gt" style="left:1738px;top:529px;transform:scaleX(0.949);transform-origin:0 0">Ast(Parent)</div>
<div class="t gt" style="left:1116px;top:551px">Open</div>
<div class="t gt" style="right:654px;top:551px">10</div>
<div class="t gt" style="left:1255px;top:551px">01</div>
<div class="t gt" style="left:1307px;top:551px">01</div>
<div class="a" style="left:1373px;top:549px;width:283px;height:18px;overflow:hidden"><div class="t gt" style="left:4px;top:2px">Auftragserteilung in Abstimmung mit AG**</div></div>
<div class="a" style="left:1734px;top:549px;width:200px;height:18px;overflow:hidden"><div class="t gt" style="left:7px;top:2px">-&gt; 1443965 -&gt; 01 Auftragserteilung in Abstimmung mit AG**</div></div>
<div class="t gt" style="left:1116px;top:572px">Open</div>
<div class="t gt" style="right:654px;top:572px">20</div>
<div class="t gt" style="left:1255px;top:572px">02</div>
<div class="t gt" style="left:1307px;top:572px">02</div>
<div class="a" style="left:1373px;top:570px;width:283px;height:18px;overflow:hidden"><div class="t gt" style="left:4px;top:2px">Wertung der eingegebenen Angebote**</div></div>
<div class="a" style="left:1734px;top:570px;width:200px;height:18px;overflow:hidden"><div class="t gt" style="left:7px;top:2px">-&gt; 1443965 -&gt; 02 Wertung der eingegebenen Angebote**</div></div>
<div class="t gt" style="left:1116px;top:593px">Open</div>
<div class="t gt" style="right:654px;top:593px">30</div>
<div class="t gt" style="left:1255px;top:593px">03</div>
<div class="t gt" style="left:1307px;top:593px">03</div>
<div class="a" style="left:1373px;top:591px;width:283px;height:18px;overflow:hidden"><div class="t gt" style="left:4px;top:2px">Ermittlung der zu inspizierenden Haltungen, Schächte</div></div>
<div class="a" style="left:1734px;top:591px;width:200px;height:18px;overflow:hidden"><div class="t gt" style="left:7px;top:2px">-&gt; 1443965 -&gt; 03 Ermittlung der zu inspizierenden</div></div>
<svg class="a" style="left:1062px;top:552px" width="11" height="11"><path d="M1.5 9.5L2.2 6.8L7.8 1.2L9.8 3.2L4.2 8.8Z" fill="#333"/></svg>
<div class="a" style="left:1030px;top:649px;width:900px;height:28px;border:1px solid #d6d6d6;border-radius:3px;background:#fff"></div>
<div class="t" style="left:1038px;top:656px;font-size:11.8px;color:#999">Positionen &gt; Positionsdaten</div>
<div class="a" style="left:1030px;top:687px;width:900px;height:28px;border:1px solid #d6d6d6;border-radius:3px;background:#fff"></div>
<div class="t" style="left:1038px;top:694px;font-size:11.8px;color:#999">Positionen &gt; Teilmenge</div>
<div class="a" style="left:1030px;top:725px;width:900px;height:28px;border:1px solid #d6d6d6;border-radius:3px;background:#fff"></div>
<div class="t" style="left:1038px;top:732px;font-size:11.8px;color:#999">Rabatt / Zuschlag</div>
<div class="a" style="left:1030px;top:763px;width:900px;height:28px;border:1px solid #d6d6d6;border-radius:3px;background:#fff"></div>
<div class="t" style="left:1038px;top:770px;font-size:11.8px;color:#999">Vertragsvereinbarungen</div>
<div class="a" style="left:1030px;top:801px;width:900px;height:158px;border:1px solid #d6d6d6;border-radius:3px;background:#fff"></div>
<div class="t" style="left:1038px;top:808px;font-size:11.6px;color:#999">Rechnungszusammenfassung</div>
<div class="a" style="left:1034px;top:825px;width:866px;height:130px;background:#f6f6f6"></div>
<div class="t" style="left:1058px;top:852px;font-size:11.8px;color:#8c8c8c">Differenz zu vorheriger AR: :</div>
<div class="t" style="left:1058px;top:877px;font-size:12px;color:#8c8c8c">Netto:</div>
<div class="a inp" style="left:1058px;top:894px;width:293px;height:22px"></div>
<div class="t it" style="left:1063px;top:900px;font-size:12px;transform:scaleX(1);transform-origin:0 0">2390</div>
<div class="t" style="left:1357px;top:877px;font-size:12px;color:#8c8c8c">Vertragsvereinbarung:</div>
<div class="a inp" style="left:1356px;top:894px;width:294px;height:22px"></div>
<div class="t it" style="left:1361px;top:900px;font-size:12px;transform:scaleX(1);transform-origin:0 0">0</div>
<div class="t" style="left:1655px;top:877px;font-size:12px;color:#8c8c8c">Brutto:</div>
<div class="a inp" style="left:1655px;top:894px;width:300px;height:22px"></div>
<div class="t it" style="left:1660px;top:900px;font-size:12px;transform:scaleX(1);transform-origin:0 0">2844,1</div>
</body></html>
